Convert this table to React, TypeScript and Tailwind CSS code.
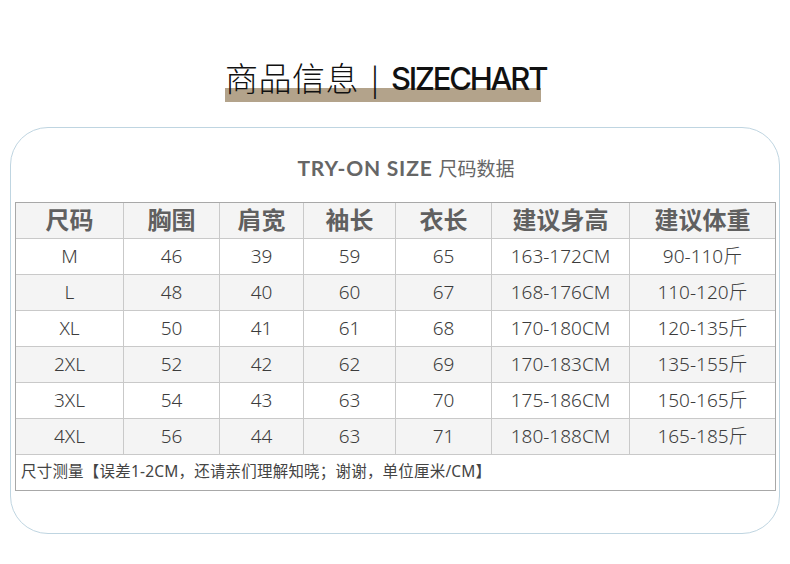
import React from "react";

const cols = ["尺码", "胸围", "肩宽", "袖长", "衣长", "建议身高", "建议体重"];
const widths = ["w-[108px]", "w-[96px]", "w-[84px]", "w-[92px]", "w-[96px]", "w-[138px]", "flex-1"];

const rows = [
  ["M", "46", "39", "59", "65", "163-172CM", "90-110斤"],
  ["L", "48", "40", "60", "67", "168-176CM", "110-120斤"],
  ["XL", "50", "41", "61", "68", "170-180CM", "120-135斤"],
  ["2XL", "52", "42", "62", "69", "170-183CM", "135-155斤"],
  ["3XL", "54", "43", "63", "70", "175-186CM", "150-165斤"],
  ["4XL", "56", "44", "63", "71", "180-188CM", "165-185斤"],
];

const cjk = "font-['Noto_Sans','Noto_Sans_CJK_SC',sans-serif]";

function Row({ cells, head, shaded }: { cells: string[]; head?: boolean; shaded?: boolean }) {
  return (
    <div className={`flex h-[36px] border-b border-[#c9c9c9] ${shaded ? "bg-[#f4f4f4]" : "bg-white"}`}>
      {cells.map((c, i) => (
        <div
          key={i}
          className={`${widths[i]} flex items-center justify-center ${i < 6 ? "border-r border-[#c9c9c9]" : ""} ${
            head ? "text-[24px] font-bold text-[#606060]" : "text-[19px] font-light text-[#3c3c3c]"
          }`}
        >
          {c}
        </div>
      ))}
    </div>
  );
}

export default function App() {
  return (
    <div className={`w-[790px] h-[564px] bg-white ${cjk}`}>
      <div className="pl-[225px] pt-[56px]">
        <div className="relative inline-block">
          <div className="absolute left-0 top-[32px] h-[14px] w-[316px] bg-[#b3a38b]" />
          <h1 className="relative flex items-center h-[44px] text-[33px] leading-none text-[#111]">
            <span className="font-light tracking-[0.5px]">商品信息</span>
            <span className="mx-[7px] font-light">|</span>
            <span className="font-['Inter',sans-serif] text-[31px] font-medium tracking-[-2.2px]">SIZECHART</span>
          </h1>
        </div>
      </div>

      <div className="mx-[10px] mt-[27px] h-[407px] rounded-[38px] border border-[#bfd5e1] pt-[24px]">
        <div className="flex items-baseline justify-center gap-[6px] pl-[22px] text-[#666]">
          <span className="font-['Lato',sans-serif] text-[21px] font-bold tracking-[0.8px]">TRY-ON SIZE</span>
          <span className="text-[19px]">尺码数据</span>
        </div>

        <div className="mt-[18px] ml-[4px] w-[761px] border border-b-0 border-[#a8a8a8]">
          <Row cells={cols} head shaded />
          {rows.map((r, i) => (
            <Row key={r[0]} cells={r} shaded={i % 2 === 1} />
          ))}
          <div className="flex h-[36px] items-center border-b border-[#a8a8a8] pl-[5px] text-[15.5px] tracking-[0.2px] text-[#444]">
            尺寸测量【误差1-2CM，还请亲们理解知晓；谢谢，单位厘米/CM】
          </div>
        </div>
      </div>
    </div>
  );
}
